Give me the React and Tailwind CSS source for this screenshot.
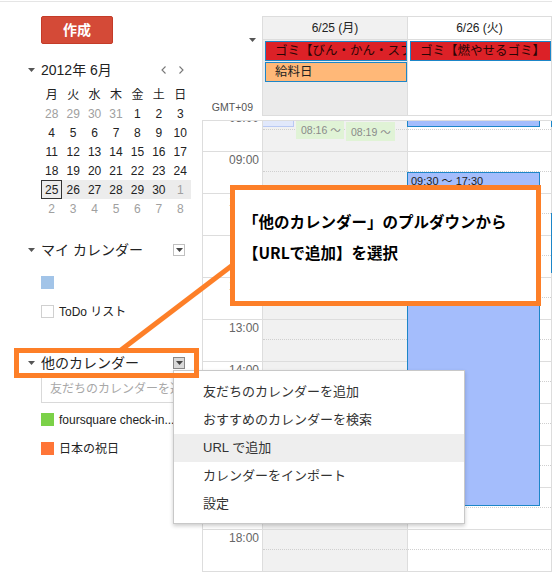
import React from 'react';

const Caret = ({ className = '' }) => (
  <svg width="7" height="4" viewBox="0 0 7 4" className={className}>
    <path d="M0 0h7L3.5 4z" fill="currentColor" />
  </svg>
);

const Chevron = ({ dir }) => (
  <svg width="5" height="8" viewBox="0 0 5 8" className="text-[#777]">
    <path d={dir === 'left' ? 'M4.5 0.5L1 4l3.5 3.5' : 'M0.5 0.5L4 4 0.5 7.5'} fill="none" stroke="currentColor" strokeWidth="1.1" />
  </svg>
);

const DropBox = ({ active }) => (
  <span className={`w-[12px] h-[12px] flex items-center justify-center border ${active ? 'border-[#888] bg-[#d9d9d9]' : 'border-[#c0c0c0] bg-white'} text-[#444]`}>
    <Caret />
  </span>
);

const weeks = [
  [[28, 1], [29, 1], [30, 1], [31, 1], [1], [2], [3]],
  [[4], [5], [6], [7], [8], [9], [10]],
  [[11], [12], [13], [14], [15], [16], [17]],
  [[18], [19], [20], [21], [22], [23], [24]],
  [[25], [26], [27], [28], [29], [30], [1, 1]],
  [[2, 1], [3, 1], [4, 1], [5, 1], [6, 1], [7, 1], [8, 1]],
];

const Sidebar = () => (
  <div className="w-[202px] shrink-0 pl-[41px] pt-[14px]">
    <button className="w-[72px] h-[28px] rounded-[2px] bg-[#d44a37] border border-[#c43b28] text-white text-[14px] font-bold leading-none">
      作成
    </button>

    <div className="mt-[18px] h-[16px] w-[150px] flex items-center">
      <span className="-ml-[13px] w-[13px] flex text-[#555]"><Caret /></span>
      <span className="text-[14px] leading-[16px]">2012年 6月</span>
      <div className="ml-auto mr-[7px] flex gap-[13px]">
        <Chevron dir="left" />
        <Chevron dir="right" />
      </div>
    </div>

    <div className="mt-[7px] w-[150px] grid grid-cols-7 text-[12px]">
      {['月', '火', '水', '木', '金', '土', '日'].map((d) => (
        <div key={d} className="h-[19px] flex items-center justify-center">{d}</div>
      ))}
      {weeks.map((w, wi) =>
        w.map(([n, dim], di) => (
          <div
            key={`${wi}-${di}`}
            className={`h-[19px] flex items-center justify-center ${dim ? 'text-[#a0a0a0]' : 'text-[#222]'} ${wi === 4 ? 'bg-[#ececec]' : ''} ${wi === 4 && di === 0 ? 'border border-[#333]' : ''}`}
          >
            {n}
          </div>
        ))
      )}
    </div>

    <div className="mt-[22px] h-[20px] w-[144px] flex items-center">
      <span className="-ml-[13px] w-[13px] flex text-[#555]"><Caret /></span>
      <span className="text-[14px]">マイ カレンダー</span>
      <span className="ml-auto"><DropBox /></span>
    </div>
    <div className="mt-[8px] h-[29px] flex items-center">
      <span className="w-[13px] h-[13px] bg-[#a2c4e8]" />
    </div>
    <div className="h-[29px] flex items-center gap-[5px]">
      <span className="w-[13px] h-[13px] border border-[#d0d0d0]" />
      <span className="text-[12px]">ToDo リスト</span>
    </div>

    <div className="mt-[27px] h-[20px] w-[144px] flex items-center">
      <span className="-ml-[13px] w-[13px] flex text-[#555]"><Caret /></span>
      <span className="text-[14px]">他のカレンダー</span>
      <span className="ml-auto"><DropBox active /></span>
    </div>
    <div className="mt-[2px] h-[28px] w-[150px] border border-[#d9d9d9] flex items-center pl-[8px] text-[12px] text-[#a8a8a8] whitespace-nowrap overflow-hidden">
      友だちのカレンダーを追加
    </div>
    <div className="mt-[2px] h-[29px] flex items-center gap-[5px]">
      <span className="w-[13px] h-[13px] bg-[#7bd148]" />
      <span className="text-[12px]">foursquare check-in...</span>
    </div>
    <div className="h-[29px] flex items-center gap-[5px]">
      <span className="w-[13px] h-[13px] bg-[#ff7537]" />
      <span className="text-[12px]">日本の祝日</span>
    </div>
  </div>
);

const hours = [8, 9, 10, 11, 12, 13, 14, 15, 16, 17, 18, 19];

const DaySlots = () =>
  hours.map((h) => (
    <div key={h} className="h-[42px] border-t border-[#ddd]">
      <div className="h-[20px] border-b border-dotted border-[#cfcfcf]" />
    </div>
  ));

const AllDay = ({ color, text, textColor }) => (
  <div className={`ml-[2px] h-[20px] border border-[#1d86c8] ${color} ${textColor} text-[12.5px] leading-[18px] pl-[9px] whitespace-nowrap overflow-hidden`}>
    {text}
  </div>
);

const Main = () => (
  <div className="flex-1 min-w-0 flex flex-col pt-[14px]">
    <div className="h-[100px] flex shrink-0">
      <div className="w-[60px] shrink-0 flex flex-col items-end">
        <span className="mt-[22px] mr-[6px] flex text-[#555]"><Caret /></span>
        <span className="mt-auto mb-0 mr-[9px] text-[10.5px] text-[#555]">GMT+09</span>
      </div>
      <div className="w-[145px] shrink-0 border-l border-t border-b border-[#ddd] bg-[#ebebeb] flex flex-col">
        <div className="h-[23px] border-b border-[#ddd] bg-[#f1f1f1] flex items-center justify-center text-[12px]">6/25 (月)</div>
        <div className="mt-px flex flex-col gap-px">
          <AllDay color="bg-[#dc2127]" textColor="text-[#2b0505]" text="ゴミ【びん・かん・スプレー缶】" />
          <AllDay color="bg-[#ffb878]" textColor="text-[#222]" text="給料日" />
        </div>
      </div>
      <div className="w-[144px] shrink-0 border-l border-t border-b border-[#ddd] flex flex-col">
        <div className="h-[23px] border-b border-[#ddd] flex items-center justify-center text-[12px]">6/26 (火)</div>
        <div className="mt-px">
          <AllDay color="bg-[#dc2127]" textColor="text-[#2b0505]" text="ゴミ【燃やせるゴミ】" />
        </div>
      </div>
      <div className="flex-1 border-l border-t border-b border-[#ddd]" />
    </div>

    <div className="mt-[4px] flex-1 min-h-0 overflow-hidden flex border-t border-l border-[#ddd]">
      <div className="w-[59px] shrink-0 -mt-[12px]">
        {hours.map((h) => (
          <div key={h} className="h-[42px] border-t border-[#ddd] text-right pr-[3px] pt-px text-[12px] leading-[14px] text-[#666]">
            {`${String(h).padStart(2, '0')}:00`}
          </div>
        ))}
      </div>

      <div className="w-[145px] shrink-0 border-l border-[#ddd] bg-[#f1f1f1]">
        <div className="relative -mt-[12px]">
          <DaySlots />
          <div className="absolute left-0 top-[-20px] w-[31px] h-[38px] bg-[#e1e8fb] border-b border-r border-[#b9c9f4]" />
          <div className="absolute left-[33px] top-[11px] w-[48px] h-[19px] bg-[#e0f3d6] text-[10.5px] text-[#8a8a8a] pl-[5px] pt-[4px] leading-[12px] whitespace-nowrap">08:16 ～</div>
          <div className="absolute left-[83px] top-[13px] w-[49px] h-[19px] bg-[#e0f3d6] text-[10.5px] text-[#8a8a8a] pl-[5px] pt-[4px] leading-[12px] whitespace-nowrap">08:19 ～</div>
        </div>
      </div>

      <div className="w-[144px] shrink-0 border-l border-[#ddd]">
        <div className="relative -mt-[12px]">
          <DaySlots />
          <div className="absolute left-[-1px] top-[-20px] w-[133px] h-[38px] bg-[#a4bdfc] border border-[#1d86c8]" />
          <div className="absolute left-[-1px] top-[63px] w-[133px] h-[334px] bg-[#a4bdfc] border border-[#1d86c8] pl-[3px] pt-[2px] text-[11px] leading-[13px] text-[#1d1d1d] whitespace-nowrap">
            09:30 ～ 17:30
          </div>
        </div>
      </div>

      <div className="flex-1 border-l border-[#ddd]">
        <div className="relative -mt-[12px]">
          <DaySlots />
          <div className="absolute left-[-1px] top-[-20px] w-[20px] h-[38px] bg-[#a4bdfc] border border-[#1d86c8]" />
          <div className="absolute left-[-1px] top-[104px] w-[20px] h-[60px] bg-[#a4bdfc] border border-[#1d86c8]" />
        </div>
      </div>
    </div>
  </div>
);

const menuItems = ['友だちのカレンダーを追加', 'おすすめのカレンダーを検索', 'URL で追加', 'カレンダーをインポート', '設定'];

export default function App() {
  return (
    <div className="relative w-[552px] h-[572px] overflow-hidden bg-white text-[#222] font-['Liberation_Sans','Noto_Sans_CJK_JP',sans-serif]">
      <div className="mt-px h-px bg-[#e5e5e5]" />
      <div className="flex h-[570px]">
        <Sidebar />
        <Main />
      </div>

      <div className="absolute left-[173px] top-[370px] w-[292px] bg-white border border-[#c8c8c8] shadow-[0_2px_4px_rgba(0,0,0,0.2)] pt-[7px] pb-[5px]">
        {menuItems.map((m, i) => (
          <div key={m} className={`h-[28px] flex items-center pl-[29px] text-[13px] text-[#333] ${i === 2 ? 'bg-[#eeeeee]' : ''}`}>
            {m}
          </div>
        ))}
      </div>

      <div className="absolute left-[14px] top-[348px] w-[185px] h-[30px] border-[5px] border-[#fd7f28]" />

      <svg className="absolute left-0 top-0 pointer-events-none" width="552" height="572">
        <line x1="121" y1="350" x2="234" y2="264" stroke="#fd7f28" strokeWidth="5" />
      </svg>

      <div className="absolute left-[230px] top-[185px] w-[311px] h-[121px] border-[5px] border-[#fd7f28] bg-white pl-[8px] pt-[16px] text-[15.5px] leading-[31px] font-bold text-black font-['Noto_Sans_CJK_JP',sans-serif]">
        <div>「他のカレンダー」のプルダウンから</div>
        <div>【URLで追加】を選択</div>
      </div>
    </div>
  );
}
